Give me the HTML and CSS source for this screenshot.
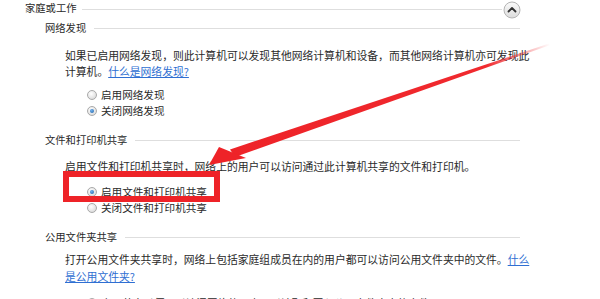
FILE: index.html
```html
<!DOCTYPE html>
<html lang="zh-CN">

<head>
    <meta charset="UTF-8">
    <title>高级共享设置</title>
    <link rel="stylesheet" href="styles.css">
</head>

<body>
    <div class="page">
        <div class="group-head">
            <span class="group-title">家庭或工作</span>
            <span class="rule"></span>
            <span class="collapse">
                <svg width="18" height="18" viewBox="0 0 18 18">
                    <defs>
                        <linearGradient id="btn" x1="0" y1="0" x2="0" y2="1">
                            <stop offset="0" stop-color="#fbfbfb"/>
                            <stop offset="1" stop-color="#dcdcdc"/>
                        </linearGradient>
                    </defs>
                    <circle cx="9" cy="9" r="8" fill="url(#btn)" stroke="#b5b5b5" stroke-width="1"/>
                    <path d="M5.5 10.5 L9 7 L12.5 10.5" fill="none" stroke="#333" stroke-width="1.8" stroke-linecap="round" stroke-linejoin="round"/>
                </svg>
            </span>
        </div>

        <div class="section-head s1">
            <span class="section-title">网络发现</span>
            <span class="rule"></span>
        </div>
        <p class="desc d1">如果已启用网络发现，则此计算机可以发现其他网络计算机和设备，而其他网络计算机亦可发现此<br>计算机。<a href="#">什么是网络发现?</a></p>
        <div class="options o1">
            <label class="option"><span class="radio"></span>启用网络发现</label>
            <label class="option"><span class="radio checked"></span>关闭网络发现</label>
        </div>

        <div class="section-head s2">
            <span class="section-title">文件和打印机共享</span>
            <span class="rule"></span>
        </div>
        <p class="desc d2">启用文件和打印机共享时，网络上的用户可以访问通过此计算机共享的文件和打印机。</p>
        <div class="options o2">
            <label class="option"><span class="radio checked"></span>启用文件和打印机共享</label>
            <label class="option"><span class="radio"></span>关闭文件和打印机共享</label>
        </div>

        <div class="section-head s3">
            <span class="section-title">公用文件夹共享</span>
            <span class="rule"></span>
        </div>
        <p class="desc d3">打开公用文件夹共享时，网络上包括家庭组成员在内的用户都可以访问公用文件夹中的文件。<a href="#">什么<br>是公用文件夹?</a></p>
        <div class="options o3">
            <label class="option"><span class="radio"></span>启用共享以便可以访问网络的用户可以读取和写入公用文件夹中的文件</label>
        </div>
    </div>

    <!-- annotation -->
    <div class="highlight"></div>
    <svg class="arrow" width="600" height="299" viewBox="0 0 600 299">
        <defs>
            <linearGradient id="shaft" gradientUnits="userSpaceOnUse" x1="232" y1="153" x2="550" y2="44">
                <stop offset="0" stop-color="#ee2328"/>
                <stop offset="0.8" stop-color="#f02a2f"/>
                <stop offset="1" stop-color="#f02a2f" stop-opacity="0"/>
            </linearGradient>
        </defs>
        <polygon points="230,149.5 549,43.6 549.6,45.2 235,157" fill="url(#shaft)"/>
        <polygon points="209,165 219,147 246,158" fill="#ee2328"/>
    </svg>
</body>

</html>
```

FILE: styles.css
```css
body {
    margin: 0;
    width: 600px;
    height: 299px;
    overflow: hidden;
    background-color: #ffffff;
    font-family: "Noto Sans CJK SC", "Noto Sans", sans-serif;
    color: #2a2a2a;
}

.page {
    padding-top: 0;
}

.rule {
    flex: 1;
    height: 1px;
    background-color: #dedede;
}

.group-head {
    display: flex;
    align-items: center;
    height: 18px;
    padding-left: 25px;
    width: 496px;
}

.group-title {
    font-size: 10.3px;
    line-height: 14px;
    margin-right: 6px;
    margin-top: -3px;
}

.group-head .rule {
    margin-top: 1px;
}

.collapse {
    display: flex;
    margin-left: 1px;
    margin-top: 1px;
}

.section-head {
    display: flex;
    align-items: center;
    height: 16px;
    padding-left: 45px;
    width: 475px;
}

.section-title {
    font-size: 10.3px;
    line-height: 16px;
    margin-right: 8px;
}

.s1 { margin-top: 2px; }
.s2 { margin-top: 14px; }
.s3 { margin-top: 14px; }

.desc {
    margin: 0;
    padding-left: 65px;
    font-size: 10.8px;
    line-height: 16px;
    white-space: nowrap;
}

.desc a {
    color: #2f6fd2;
    text-decoration: underline;
}

.d1 { margin-top: 11px; }
.d2 { margin-top: 10px; }
.d3 { margin-top: 6px; line-height: 17px; }

.options {
    display: flex;
    flex-direction: column;
    padding-left: 87px;
}

.o1 { margin-top: 8px; }
.o2 { margin-top: 10px; }
.o3 { margin-top: 10px; }

.option {
    display: flex;
    align-items: center;
    height: 15.5px;
    font-size: 10.6px;
    white-space: nowrap;
}

.radio {
    width: 8px;
    height: 8px;
    border: 1px solid #a9a9a9;
    border-radius: 50%;
    background: radial-gradient(circle at 40% 35%, #ffffff 0%, #e4e4e4 60%, #cfcfcf 100%);
    margin-right: 4px;
    margin-top: 1px;
    position: relative;
}

.radio.checked::after {
    content: "";
    position: absolute;
    left: 2px;
    top: 2px;
    width: 4px;
    height: 4px;
    border-radius: 50%;
    background: radial-gradient(circle at 40% 35%, #6fb0ec 0%, #1d5fa6 100%);
}

.highlight {
    position: absolute;
    left: 63px;
    top: 171px;
    width: 145px;
    height: 19px;
    border: 6px solid #ee2328;
}

.arrow {
    position: absolute;
    left: 0;
    top: 0;
}
```
